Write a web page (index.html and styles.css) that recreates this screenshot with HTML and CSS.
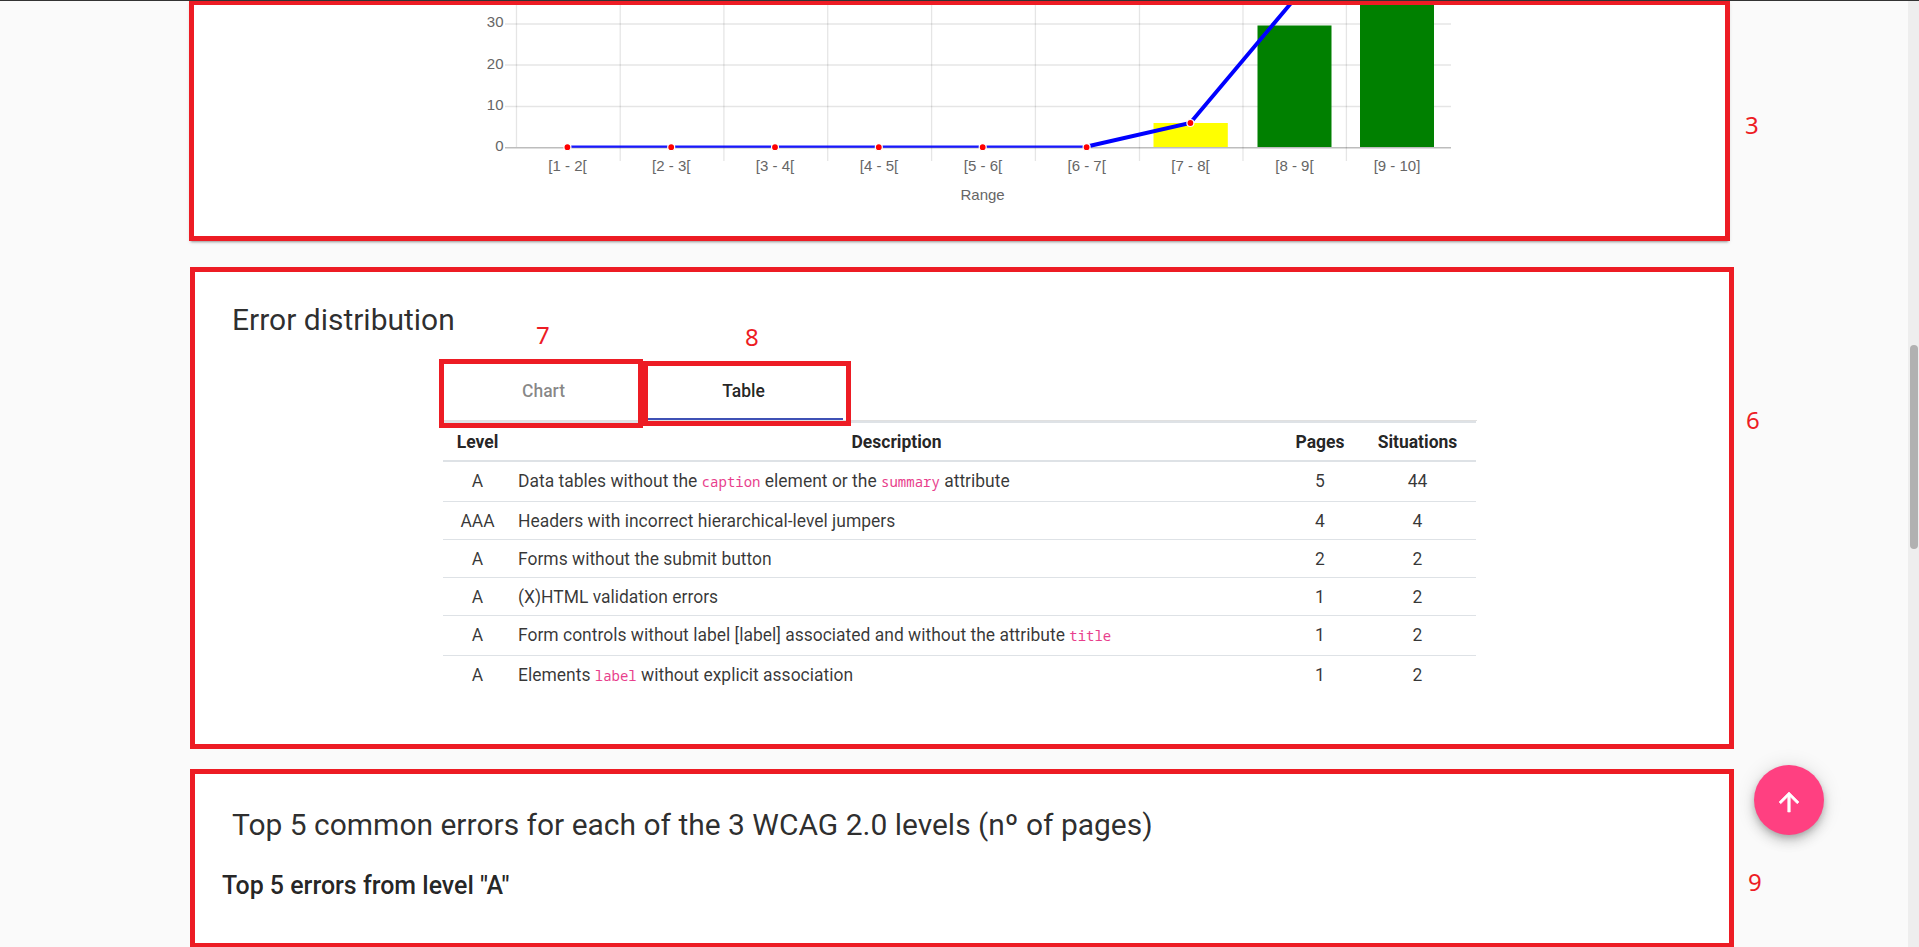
FILE: index.html
```html
<!DOCTYPE html>
<html lang="en">
<head>
<meta charset="utf-8">
<title>Accessibility report</title>
<link rel="stylesheet" href="styles.css">
</head>
<body>
<main class="page">
  <section class="card card-chart">
    <svg class="chart" viewBox="0 0 970 231" width="970" height="231">
      <g class="grid">
        <path d="M21 19H967M21 60H967M21 101.5H967"/>
        <path d="M32.5 0V142M136.2 0V156M239.9 0V156M343.7 0V156M447.6 0V156M551.4 0V156M655.5 0V156M759 0V156M862.4 0V156"/>
      </g>
      <path class="axis" d="M21 142.7H967"/>
      <rect class="bar-fair" x="669.5" y="118" width="74.3" height="24"/>
      <rect class="bar-good" x="773.5" y="20.5" width="74" height="121.5"/>
      <rect class="bar-good" x="876" y="0" width="74" height="142"/>
      <path class="thin-line" d="M83.5 141.7H603"/>
      <path class="line" d="M603 141.5L706.2 118L810.5 -6"/>
      <g class="points">
        <circle cx="83.4" cy="142.2" r="3.5"/><circle cx="187.2" cy="142.2" r="3.5"/><circle cx="291" cy="142.2" r="3.5"/><circle cx="394.8" cy="142.2" r="3.5"/><circle cx="498.7" cy="142.2" r="3.5"/><circle cx="602.6" cy="142.2" r="3.5"/><circle cx="706.4" cy="118" r="3.5"/>
      </g>
      <g class="ticks-y"><text x="19.5" y="22">30</text><text x="19.5" y="63.5">20</text><text x="19.5" y="105">10</text><text x="19.5" y="146">0</text></g>
      <g class="ticks-x"><text x="83.5" y="166">[1 - 2[</text><text x="187.3" y="166">[2 - 3[</text><text x="291" y="166">[3 - 4[</text><text x="395" y="166">[4 - 5[</text><text x="499" y="166">[5 - 6[</text><text x="602.7" y="166">[6 - 7[</text><text x="706.5" y="166">[7 - 8[</text><text x="810.4" y="166">[8 - 9[</text><text x="913" y="166">[9 - 10]</text><text x="498.6" y="195">Range</text></g>
    </svg>
  </section>

  <section class="card card-errors">
    <h2 class="title">Error distribution</h2>
    <div class="panel">
      <div class="tabs">
        <div class="tab">Chart</div>
        <div class="tab tab-active">Table</div>
      </div>
      <table class="table">
        <colgroup><col class="col-level"><col class="col-desc"><col class="col-pages"><col class="col-sit"></colgroup>
        <thead><tr><th>Level</th><th>Description</th><th>Pages</th><th>Situations</th></tr></thead>
        <tbody>
          <tr class="tall"><td>A</td><td class="desc">Data tables without the <code>caption</code> element or the <code>summary</code> attribute</td><td>5</td><td>44</td></tr>
          <tr><td>AAA</td><td class="desc">Headers with incorrect hierarchical-level jumpers</td><td>4</td><td>4</td></tr>
          <tr><td>A</td><td class="desc">Forms without the submit button</td><td>2</td><td>2</td></tr>
          <tr><td>A</td><td class="desc">(X)HTML validation errors</td><td>1</td><td>2</td></tr>
          <tr class="tall"><td>A</td><td class="desc">Form controls without label [label] associated and without the attribute <code>title</code></td><td>1</td><td>2</td></tr>
          <tr class="tall"><td>A</td><td class="desc">Elements <code>label</code> without explicit association</td><td>1</td><td>2</td></tr>
        </tbody>
      </table>
    </div>
  </section>

  <section class="card card-top">
    <h2 class="title">Top 5 common errors for each of the 3 WCAG 2.0 levels (nº of pages)</h2>
    <h3 class="subtitle">Top 5 errors from level "A"</h3>
  </section>
</main>

<div class="mark mark-tab-chart"></div>
<div class="mark mark-tab-table"></div>
<span class="num num-3">3</span>
<span class="num num-6">6</span>
<span class="num num-7">7</span>
<span class="num num-8">8</span>
<span class="num num-9">9</span>

<button class="fab" aria-label="Back to top">
  <svg width="30" height="30" viewBox="0 0 24 24"><path fill="#fff" stroke="#fff" stroke-width=".5" d="M4 12l1.41 1.41L11 7.83V20h2V7.83l5.58 5.59L20 12l-8-8-8 8z"/></svg>
</button>
<div class="scrollbar"><div class="thumb"></div></div>
</body>
</html>
```
FILE: styles.css
```css
* { box-sizing: border-box; }
html, body { height: 100%; }
body {
  margin: 0;
  overflow: hidden;
  background: #fafafa;
  border-top: 1px solid #333;
  color: rgba(0, 0, 0, .87);
  font-family: Roboto, sans-serif;
  font-size: 17.5px;
}
.page {
  display: flex;
  flex-direction: column;
  margin-top: -1px;
  padding-left: 190px;
}
.card {
  width: 1544px;
  background: #fff;
  border: 5px solid #ed1c24;
  flex: none;
}
.card-chart {
  width: 1541px;
  height: 241px;
  margin-left: -1px;
  margin-bottom: 26px;
  box-shadow: 0 3px 2px -2px rgba(0, 0, 0, .3), 0 2px 4px -1px rgba(0, 0, 0, .15);
  padding-left: 290px;
}
.chart { display: block; }
.grid path { stroke: rgba(0, 0, 0, .1); stroke-width: 1.3; fill: none; }
.axis { stroke: rgba(0, 0, 0, .26); stroke-width: 1.6; }
.bar-fair { fill: #ff0; }
.bar-good { fill: green; }
.thin-line { stroke: #00f; stroke-width: 2.2; opacity: .9; }
.line { stroke: #00f; stroke-width: 3.9; fill: none; }
.points circle { fill: red; stroke: #fff; stroke-width: 1.2; }
.chart text { font-family: "Liberation Sans", Arial, sans-serif; font-size: 15px; fill: #666; }
.ticks-y text { text-anchor: end; }
.ticks-x text { text-anchor: middle; }

.card-errors { height: 482px; margin-bottom: 20px; }
.title { margin: 0; font-size: 29.97px; font-weight: 400; line-height: 40px; color: rgba(0, 0, 0, .83); }
.card-errors .title { padding: 28px 0 0 37px; }
.panel { width: 1034px; margin: 21px 0 0 248px; }
.tabs { display: flex; height: 60px; border-bottom: 1px solid #e0e0e0; }
.tab {
  width: 200px;
  height: 59px;
  line-height: 61px;
  padding-left: 1px;
  text-align: center;
  font-weight: 500;
  color: rgba(0, 0, 0, .48);
}
.tab-active { color: rgba(0, 0, 0, .87); border-bottom: 2px solid #3f51b5; }
.table { width: 1033px; border-collapse: separate; border-spacing: 0; table-layout: fixed; }
.col-level { width: 69px; }
.col-desc { width: 769px; }
.col-pages { width: 78px; }
.table th, .table td { padding: 0; text-align: center; }
.table th { height: 41px; border-top: 2px solid #dee2e6; border-bottom: 2px solid #dee2e6; font-weight: 700; }
.table td { height: 38px; border-top: 1px solid #dee2e6; font-size: 17.48px; color: rgba(0, 0, 0, .79); }
.table .tall td { height: 40px; padding-bottom: 2px; }
.table tbody tr:first-child td { border-top: 0; height: 39px; padding-bottom: 1px; }
.table .desc { text-align: left; padding-left: 6px; }
.table code { font-family: "Noto Sans Mono", "DejaVu Sans Mono", monospace; font-size: 14px; font-weight: 400; color: #e83e8c; }

.card-top { height: 178px; border-bottom-width: 4px; }
.card-top .title { padding: 31px 0 0 37px; }
.subtitle { margin: 21px 0 0 27px; font-size: 24.95px; font-weight: 500; line-height: 40px; }

.mark { position: absolute; border: 5px solid #ed1c24; }
.mark-tab-chart { left: 439px; top: 359px; width: 204px; height: 69px; }
.mark-tab-table { left: 643px; top: 361px; width: 208px; height: 65px; }
.num { position: absolute; font: 24px/24px "Noto Sans", sans-serif; color: #ed1c24; }
.num-3 { left: 1745px; top: 113px; }
.num-6 { left: 1746px; top: 408px; }
.num-7 { left: 536px; top: 323px; }
.num-8 { left: 745px; top: 325px; }
.num-9 { left: 1748px; top: 870px; }

.fab {
  position: absolute;
  left: 1754px;
  top: 765px;
  width: 70px;
  height: 70px;
  padding: 4px 0 0;
  border: 0;
  border-radius: 50%;
  background: #ff4081;
  box-shadow: 0 3px 6px -1px rgba(0, 0, 0, .2), 0 7px 12px rgba(0, 0, 0, .14), 0 1px 20px rgba(0, 0, 0, .12);
}
.fab svg { display: block; margin: 0 auto; }
.scrollbar { position: absolute; top: 1px; right: 0; bottom: 0; width: 11px; padding: 344px 1px 0 2px; background: #eee; }
.thumb { height: 204px; border-radius: 4px; background: #b1b1b1; }
```
